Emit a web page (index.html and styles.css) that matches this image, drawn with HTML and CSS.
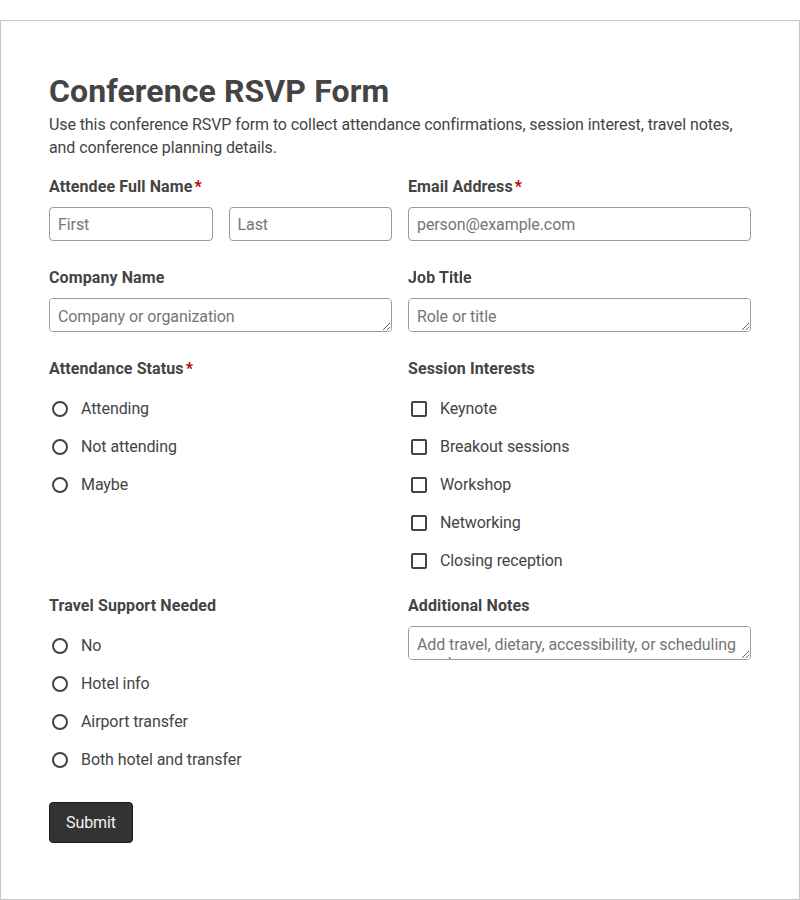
FILE: index.html
```html
<!DOCTYPE html>
<html lang="en">
    <head>
        <meta charset="UTF-8">
        <meta name="viewport" content="width=device-width, initial-scale=1.0">
        <title>Conference RSVP Form</title>
        <link rel="stylesheet" href="styles.css">
    </head>

    <body>
        <div class="form-card">
            <h1 class="form-title">Conference RSVP Form</h1>
            <p class="form-intro">Use this conference RSVP form to collect attendance confirmations, session interest, travel notes, and conference planning details.</p>

            <form class="rsvp-form">
                <div class="form-grid">
                    <!-- 姓名 -->
                    <div class="field">
                        <label class="field-label">Attendee Full Name<span class="required">*</span></label>
                        <div class="name-pair">
                            <input class="text-input" type="text" placeholder="First">
                            <input class="text-input" type="text" placeholder="Last">
                        </div>
                    </div>
                    <div class="field">
                        <label class="field-label">Email Address<span class="required">*</span></label>
                        <input class="text-input" type="email" placeholder="person@example.com">
                    </div>

                    <div class="field">
                        <label class="field-label">Company Name</label>
                        <textarea class="text-input text-area" rows="1" placeholder="Company or organization"></textarea>
                    </div>
                    <div class="field">
                        <label class="field-label">Job Title</label>
                        <textarea class="text-input text-area" rows="1" placeholder="Role or title"></textarea>
                    </div>

                    <!-- 出席状态 -->
                    <div class="field">
                        <label class="field-label">Attendance Status<span class="required">*</span></label>
                        <div class="option-list">
                            <label class="option"><input class="radio" type="radio" name="attendance">Attending</label>
                            <label class="option"><input class="radio" type="radio" name="attendance">Not attending</label>
                            <label class="option"><input class="radio" type="radio" name="attendance">Maybe</label>
                        </div>
                    </div>
                    <div class="field">
                        <label class="field-label">Session Interests</label>
                        <div class="option-list">
                            <label class="option"><input class="checkbox" type="checkbox">Keynote</label>
                            <label class="option"><input class="checkbox" type="checkbox">Breakout sessions</label>
                            <label class="option"><input class="checkbox" type="checkbox">Workshop</label>
                            <label class="option"><input class="checkbox" type="checkbox">Networking</label>
                            <label class="option"><input class="checkbox" type="checkbox">Closing reception</label>
                        </div>
                    </div>

                    <!-- 差旅 -->
                    <div class="field">
                        <label class="field-label">Travel Support Needed</label>
                        <div class="option-list">
                            <label class="option"><input class="radio" type="radio" name="travel">No</label>
                            <label class="option"><input class="radio" type="radio" name="travel">Hotel info</label>
                            <label class="option"><input class="radio" type="radio" name="travel">Airport transfer</label>
                            <label class="option"><input class="radio" type="radio" name="travel">Both hotel and transfer</label>
                        </div>
                    </div>
                    <div class="field">
                        <label class="field-label">Additional Notes</label>
                        <textarea class="text-input text-area" rows="1" placeholder="Add travel, dietary, accessibility, or scheduling needs."></textarea>
                    </div>
                </div>

                <button class="submit-button" type="submit">Submit</button>
            </form>
        </div>
    </body>
</html>
```

FILE: styles.css
```css
html, body{
    margin: 0;
}
body{
    font-family: Roboto, "Liberation Sans", sans-serif;
    color: #444;
    letter-spacing: -0.09px;
}
.form-card{
    margin-top: 20px;
    min-height: 880px;
    box-sizing: border-box;
    border: 1px solid #c6c6c6;
    padding: 48px;
}
.form-title{
    margin: 3px 0 3px;
    font-size: 32px;
    line-height: 1.2;
    font-weight: 700;
    letter-spacing: 0.1px;
}
.form-intro{
    margin: 0 0 16px;
    font-size: 16px;
    line-height: 23px;
}

.form-grid{
    display: grid;
    grid-template-columns: 1fr 1fr;
    column-gap: 16px;
    row-gap: 22px;
}
.field-label{
    display: block;
    font-size: 16px;
    font-weight: 700;
    line-height: 24px;
    margin-bottom: 8px;
    letter-spacing: 0.1px;
}
.required{
    color: #b30000;
    margin-left: 2px;
}
.name-pair{
    display: grid;
    grid-template-columns: 1fr 1fr;
    gap: 16px;
}

.text-input{        /* 输入框通用样式 */
    display: block;
    width: 100%;
    height: 34px;
    box-sizing: border-box;
    margin: 0 0 3px;
    padding: 0 8px;
    border: 1px solid #9a9a9a;
    border-radius: 4px;
    font-family: inherit;
    font-size: 16px;
    letter-spacing: inherit;
    color: #444;
    background: #fff;
}
.text-area{
    padding: 8px;
    line-height: normal;
    resize: vertical;
}

.option-list{
    display: flex;
    flex-direction: column;
    gap: 14px;
    padding-top: 7px;
}
.option{
    display: flex;
    align-items: center;
    height: 24px;
    font-size: 16px;
}
.radio,
.checkbox{
    appearance: none;
    -webkit-appearance: none;
    flex: none;
    width: 16px;
    height: 16px;
    box-sizing: border-box;
    margin: 1px 13px 0 3px;
    border: 2px solid #444;
    background: #fff;
}
.radio{
    border-radius: 50%;
}
.checkbox{
    border-radius: 2px;
}

.submit-button{
    margin-top: 31px;
    padding: 10px 16px;
    line-height: 19px;
    font-family: inherit;
    font-size: 16px;
    letter-spacing: inherit;
    color: #f4f4f4;
    background-color: #333;
    border: 1px solid #1c1c1c;
    border-radius: 4px;
}
```
